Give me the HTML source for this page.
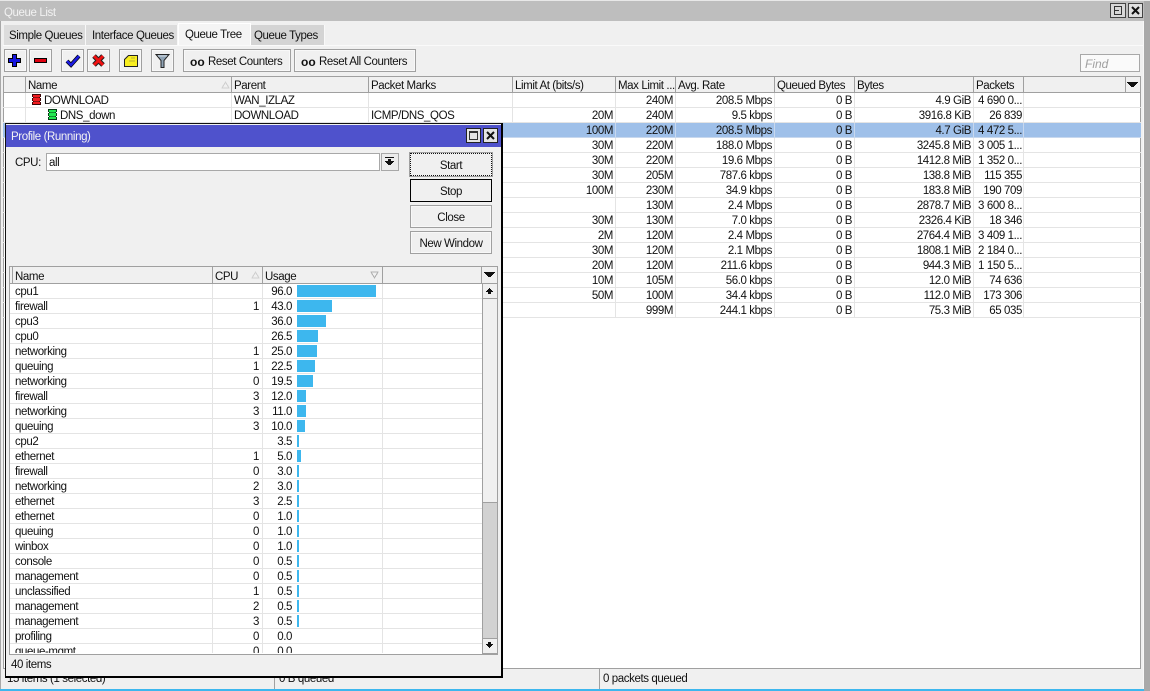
<!DOCTYPE html>
<html><head><meta charset="utf-8">
<style>
html,body{margin:0;padding:0;width:1150px;height:691px;overflow:hidden;background:#f0f0f0}
body{position:relative;font:11.5px/16px "Liberation Sans",sans-serif;letter-spacing:-.4px;color:#111}
div,span{position:absolute;box-sizing:border-box;white-space:nowrap}
svg{position:absolute;display:block;shape-rendering:crispEdges}
.tab{top:25px;height:20px;background:#dcdcdc;border-right:1px solid #f8f8f8;padding:3px 0 0 5px}
.btn{top:49px;height:23px;border:1px solid #a0a0a0;background:#f0f0f0;box-shadow:inset 0 0 0 1px #f8f8f8}
.btn b{position:absolute;left:6px;top:4px;font-size:12px;letter-spacing:0}
.hd{top:76px;height:17px;background:#f0f0f0;border-right:1px solid #a0a0a0;border-top:1px solid #a0a0a0;border-bottom:1px solid #a0a0a0;padding:1px 0 0 2px}
.r{left:3px;width:1138px;height:15px;border-bottom:1px solid #e4e4e4}
.r span{top:0;height:14px;border-right:1px solid #e4e4e4;padding:0 2px;text-align:right}
.r .sel{border-right-color:#c8d8ee}
.c0{left:0;width:23px}.c1{left:23px;width:206px;text-align:left!important}.c2{left:229px;width:137px;text-align:left!important}.c3{left:366px;width:144px;text-align:left!important}
.c4{left:510px;width:103px}.c5{left:613px;width:60px}.c6{left:673px;width:99px}.c7{left:772px;width:80px}.c8{left:852px;width:119px}.c9{left:971px;width:50px;padding:0 1px!important}
.pb{left:410px;width:82px;height:23px;border:1px solid #a0a0a0;background:#f0f0f0;text-align:center;padding-top:4px;box-shadow:inset 0 0 0 1px #f8f8f8}
.ph{top:266px;height:18px;background:#f0f0f0;border-right:1px solid #a0a0a0;border-top:1px solid #a0a0a0;border-bottom:1px solid #a0a0a0;padding:2px 0 0 2px}
.p{left:0;width:472px;height:15px;border-bottom:1px solid #e4e4e4}
.p span{top:0;height:14px;border-right:1px solid #e4e4e4}
.n{left:-1px;width:204px;padding-left:6px}.u{left:203px;width:50px;text-align:right;padding-right:3px}.s{left:253px;width:120px}.v{left:253px;width:29px;border:0!important;text-align:right}
.b{left:287px!important;top:1px!important;height:12px!important;background:#3db7ee;border:0!important}
</style></head><body>

<div style="left:0;top:0;width:1150px;height:1px;background:#e8e8e8"></div>
<div style="left:0;top:1px;width:1150px;height:20px;background:#bebebe"></div>
<div style="left:4px;top:5px;color:#f2f2f2">Queue List</div>
<div style="left:0;top:21px;width:1px;height:670px;background:#a8a8a8"></div>
<div style="left:1144px;top:1px;width:6px;height:690px;background:#a9a9a9"></div>
<div style="left:1143px;top:21px;width:1px;height:668px;background:#f8f8f8"></div>
<div style="left:1110px;top:3px;width:16px;height:15px;border:1px solid #444;background:#d8d8d8"><div style="left:3px;top:2px;width:8px;height:9px;border:1px solid #333"></div><div style="left:3px;top:6px;width:5px;height:1px;background:#333"></div></div>
<div style="left:1128px;top:3px;width:15px;height:15px;border:1px solid #444;background:#e0e0e0"><svg width="13" height="13" style="left:0;top:0;shape-rendering:auto"><path d="M3 3l7 7M10 3l-7 7" stroke="#111" stroke-width="2"/></svg></div>

<div class="tab" style="left:4px;width:82px">Simple Queues</div>
<div class="tab" style="left:86px;width:92px;padding-left:6px">Interface Queues</div>
<div class="tab" style="left:178px;top:23px;height:23px;width:73px;background:#f4f4f4;border:1px solid #fff;padding:3px 0 0 6px">Queue Tree</div>
<div class="tab" style="left:251px;width:74px;background:#d4d4d4;padding-left:3px">Queue Types</div>
<div style="left:3px;top:45px;width:1140px;height:1px;background:#fafafa"></div>

<div class="btn" style="left:4px;width:23px"><svg width="21" height="21"><path d="M7 4h5v4h4v5h-4v4H7v-4H3V8h4z" fill="#000"/><path d="M8 5h3v4h4v3h-4v4H8v-4H4V9h4z" fill="#1515e0"/></svg></div>
<div class="btn" style="left:29px;width:23px"><svg width="21" height="21"><rect x="4" y="8" width="13" height="5" fill="#000"/><rect x="5" y="9" width="11" height="3" fill="#e00010"/></svg></div>
<div class="btn" style="left:61px;width:23px"><svg width="21" height="21" style="shape-rendering:auto"><path d="M5 11l4 4 8-9" fill="none" stroke="#000" stroke-width="4"/><path d="M5 11l4 4 8-9" fill="none" stroke="#1a1ae0" stroke-width="2.500"/></svg></div>
<div class="btn" style="left:87px;width:23px"><svg width="21" height="21" style="shape-rendering:auto"><path d="M6 6l9 9M15 6l-9 9" stroke="#222" stroke-width="5"/><path d="M6 6l9 9M15 6l-9 9" stroke="#f01010" stroke-width="3"/></svg></div>
<div class="btn" style="left:119px;width:23px"><svg width="21" height="21"><path d="M4.500 16.500V9.500l4-4h9v11z" fill="#f8ee20" stroke="#222" style="shape-rendering:auto"/><path d="M11 8h4M9 11h6" stroke="#b8b030"/></svg></div>
<div class="btn" style="left:151px;width:23px"><svg width="21" height="21" style="shape-rendering:auto"><path d="M4 4.500h13l-5 6v7h-3v-7z" fill="#8fa3b5" stroke="#222"/><path d="M6 6h9" stroke="#d5dde5"/></svg></div>
<div class="btn" style="left:183px;width:108px"><b>oo</b><span style="left:24px;top:4px">Reset Counters</span></div>
<div class="btn" style="left:294px;width:122px"><b>oo</b><span style="left:24px;top:4px">Reset All Counters</span></div>
<div style="left:1080px;top:54px;width:60px;height:18px;border:1px solid #a8a8a8;background:#fafafa;color:#a0a0a0;font-style:italic;font-size:12px;padding:1px 0 0 4px;letter-spacing:0">Find</div>

<!-- main table -->
<div style="left:3px;top:76px;width:1138px;height:593px;background:#fff;border:1px solid #a0a0a0"></div>
<div class="hd" style="left:3px;width:23px;border-left:1px solid #a0a0a0"></div>
<div class="hd" style="left:26px;width:206px">Name<svg width="9" height="8" style="left:195px;top:4px"><path d="M1 7h7L4.500 1z" fill="#f0f0f0" stroke="#d0d0d0"/></svg></div>
<div class="hd" style="left:232px;width:137px">Parent</div>
<div class="hd" style="left:369px;width:144px">Packet Marks</div>
<div class="hd" style="left:513px;width:103px">Limit At (bits/s)</div>
<div class="hd" style="left:616px;width:60px">Max Limit ...</div>
<div class="hd" style="left:676px;width:99px">Avg. Rate</div>
<div class="hd" style="left:775px;width:80px">Queued Bytes</div>
<div class="hd" style="left:855px;width:119px">Bytes</div>
<div class="hd" style="left:974px;width:50px">Packets</div>
<div class="hd" style="left:1024px;width:102px"></div>
<div class="hd" style="left:1126px;width:15px;padding:0"><svg width="11" height="6" style="left:1px;top:5px"><path d="M0 0h11v1h-1v1H9v1H8v1H7v1H4V4H3V3H2V2H1V1H0z" fill="#111"/></svg></div>

<div class="r" style="top:93px"><span class="c0"></span><span class="c1"></span><span class="c2">WAN_IZLAZ</span><span class="c3"></span><span class="c4"></span><span class="c5">240M</span><span class="c6">208.5 Mbps</span><span class="c7">0 B</span><span class="c8">4.9 GiB</span><span class="c9">4 690 0...</span></div>
<div class="r" style="top:108px"><span class="c0"></span><span class="c1"></span><span class="c2">DOWNLOAD</span><span class="c3">ICMP/DNS_QOS</span><span class="c4">20M</span><span class="c5">240M</span><span class="c6">9.5 kbps</span><span class="c7">0 B</span><span class="c8">3916.8 KiB</span><span class="c9">26 839</span></div>
<div style="left:44px;top:93px">DOWNLOAD</div>
<div style="left:60px;top:108px">DNS_down</div>
<svg width="11" height="11" style="left:31px;top:94px"><path d="M1 0h9v3H9v1h1v3H9v1h1v3H1V8h1V7H1V4h1V3H1z" fill="#3a0505"/><path d="M2 1h7v2H8v1h1v3H8v1h1v2H2V8h1V7H2V4h1V3H2z" fill="#f01c20"/><path d="M3 3h5v1H3zM3 7h5v1H3z" fill="#901010"/></svg>
<svg width="11" height="11" style="left:47px;top:109px"><path d="M1 0h9v3H9v1h1v3H9v1h1v3H1V8h1V7H1V4h1V3H1z" fill="#053a15"/><path d="M2 1h7v2H8v1h1v3H8v1h1v2H2V8h1V7H2V4h1V3H2z" fill="#22e850"/><path d="M3 3h5v1H3zM3 7h5v1H3z" fill="#109030"/></svg>

<div class="r" style="top:123px;background:#9fc0e9;border-bottom-color:#c8d8ee"><span class="c4 sel">100M</span><span class="c5 sel">220M</span><span class="c6 sel">208.5 Mbps</span><span class="c7 sel">0 B</span><span class="c8 sel">4.7 GiB</span><span class="c9 sel">4 472 5...</span></div>
<div class="r" style="top:138px"><span class="c4">30M</span><span class="c5">220M</span><span class="c6">188.0 Mbps</span><span class="c7">0 B</span><span class="c8">3245.8 MiB</span><span class="c9">3 005 1...</span></div>
<div class="r" style="top:153px"><span class="c4">30M</span><span class="c5">220M</span><span class="c6">19.6 Mbps</span><span class="c7">0 B</span><span class="c8">1412.8 MiB</span><span class="c9">1 352 0...</span></div>
<div class="r" style="top:168px"><span class="c4">30M</span><span class="c5">205M</span><span class="c6">787.6 kbps</span><span class="c7">0 B</span><span class="c8">138.8 MiB</span><span class="c9">115 355</span></div>
<div class="r" style="top:183px"><span class="c4">100M</span><span class="c5">230M</span><span class="c6">34.9 kbps</span><span class="c7">0 B</span><span class="c8">183.8 MiB</span><span class="c9">190 709</span></div>
<div class="r" style="top:198px"><span class="c4"></span><span class="c5">130M</span><span class="c6">2.4 Mbps</span><span class="c7">0 B</span><span class="c8">2878.7 MiB</span><span class="c9">3 600 8...</span></div>
<div class="r" style="top:213px"><span class="c4">30M</span><span class="c5">130M</span><span class="c6">7.0 kbps</span><span class="c7">0 B</span><span class="c8">2326.4 KiB</span><span class="c9">18 346</span></div>
<div class="r" style="top:228px"><span class="c4">2M</span><span class="c5">120M</span><span class="c6">2.4 Mbps</span><span class="c7">0 B</span><span class="c8">2764.4 MiB</span><span class="c9">3 409 1...</span></div>
<div class="r" style="top:243px"><span class="c4">30M</span><span class="c5">120M</span><span class="c6">2.1 Mbps</span><span class="c7">0 B</span><span class="c8">1808.1 MiB</span><span class="c9">2 184 0...</span></div>
<div class="r" style="top:258px"><span class="c4">20M</span><span class="c5">120M</span><span class="c6">211.6 kbps</span><span class="c7">0 B</span><span class="c8">944.3 MiB</span><span class="c9">1 150 5...</span></div>
<div class="r" style="top:273px"><span class="c4">10M</span><span class="c5">105M</span><span class="c6">56.0 kbps</span><span class="c7">0 B</span><span class="c8">12.0 MiB</span><span class="c9">74 636</span></div>
<div class="r" style="top:288px"><span class="c4">50M</span><span class="c5">100M</span><span class="c6">34.4 kbps</span><span class="c7">0 B</span><span class="c8">112.0 MiB</span><span class="c9">173 306</span></div>
<div class="r" style="top:303px"><span class="c4"></span><span class="c5">999M</span><span class="c6">244.1 kbps</span><span class="c7">0 B</span><span class="c8">75.3 MiB</span><span class="c9">65 035</span></div>

<!-- status -->
<div style="left:3px;top:669px;width:272px;height:20px;border-right:1px solid #a0a0a0;padding:2px 0 0 4px">15 items (1 selected)</div>
<div style="left:275px;top:669px;width:325px;height:20px;border-right:1px solid #a0a0a0;padding:2px 0 0 4px">0 B queued</div>
<div style="left:603px;top:671px">0 packets queued</div>
<div style="left:0;top:689px;width:1144px;height:2px;background:#3db7ee"></div>

<!-- Profile window -->
<div style="left:5px;top:123px;width:498px;height:555px;background:#f0f0f0;border:1px solid #111;border-right:2px solid #000;border-bottom:2px solid #000"></div>
<div style="left:6px;top:125px;width:495px;height:22px;background:#4f52cc"></div>
<div style="left:11px;top:129px;color:#f4f4f4">Profile (Running)</div>
<div style="left:466px;top:128px;width:15px;height:15px;border:1px solid #222;background:#e4e4e4"><div style="left:2px;top:2px;width:9px;height:9px;border:1px solid #333;border-top-width:2px"></div></div>
<div style="left:483px;top:128px;width:15px;height:15px;border:1px solid #222;background:#e4e4e4"><svg width="13" height="13" style="left:0;top:0;shape-rendering:auto"><path d="M3 3l7 7M10 3l-7 7" stroke="#111" stroke-width="2"/></svg></div>

<div style="left:15px;top:155px">CPU:</div>
<div style="left:46px;top:153px;width:334px;height:18px;background:#fff;border:1px solid #a8a8a8;padding:1px 0 0 2px">all</div>
<div style="left:381px;top:153px;width:18px;height:18px;border:1px solid #a8a8a8;background:#ececec"><svg width="12" height="12" style="left:2px;top:2px"><path d="M1 1h9v1H1zM4 3h3v2h3v1H9v1H8v1H7v1H4V8H3V7H2V6H1V5h3z" fill="#111"/></svg></div>
<div class="pb" style="top:153px;border:1px dotted #111;outline:1px solid #a0a0a0;box-shadow:none">Start</div>
<div class="pb" style="top:179px;border:1px solid #000;box-shadow:none">Stop</div>
<div class="pb" style="top:205px">Close</div>
<div class="pb" style="top:231px">New Window</div>

<div style="left:9px;top:266px;width:489px;height:388px;background:#fff;border-left:1px solid #a0a0a0;border-right:1px solid #a0a0a0"></div>
<div class="ph" style="left:9px;width:4px;border-left:1px solid #a0a0a0"></div>
<div class="ph" style="left:13px;width:200px">Name</div>
<div class="ph" style="left:213px;width:50px">CPU<svg width="9" height="8" style="left:38px;top:4px"><path d="M1 7h7L4.500 1z" fill="#f0f0f0" stroke="#d0d0d0"/></svg></div>
<div class="ph" style="left:263px;width:120px">Usage<svg width="9" height="8" style="left:107px;top:4px"><path d="M1 1h7L4.500 7z" fill="#f0f0f0" stroke="#b0b0b0"/></svg></div>
<div class="ph" style="left:383px;width:99px"></div>
<div class="ph" style="left:482px;width:16px;border-left:0;padding:0"><svg width="11" height="6" style="left:2px;top:5px"><path d="M0 0h11v1h-1v1H9v1H8v1H7v1H4V4H3V3H2V2H1V1H0z" fill="#111"/></svg></div>

<div style="left:10px;top:284px;width:472px;height:369px;overflow:hidden">
<div class="p" style="top:0"><span class="n">cpu1</span><span class="u"></span><span class="s"></span><span class="v">96.0</span><span class="b" style="width:79px"></span></div>
<div class="p" style="top:15px"><span class="n">firewall</span><span class="u">1</span><span class="s"></span><span class="v">43.0</span><span class="b" style="width:35px"></span></div>
<div class="p" style="top:30px"><span class="n">cpu3</span><span class="u"></span><span class="s"></span><span class="v">36.0</span><span class="b" style="width:29px"></span></div>
<div class="p" style="top:45px"><span class="n">cpu0</span><span class="u"></span><span class="s"></span><span class="v">26.5</span><span class="b" style="width:21px"></span></div>
<div class="p" style="top:60px"><span class="n">networking</span><span class="u">1</span><span class="s"></span><span class="v">25.0</span><span class="b" style="width:20px"></span></div>
<div class="p" style="top:75px"><span class="n">queuing</span><span class="u">1</span><span class="s"></span><span class="v">22.5</span><span class="b" style="width:18px"></span></div>
<div class="p" style="top:90px"><span class="n">networking</span><span class="u">0</span><span class="s"></span><span class="v">19.5</span><span class="b" style="width:16px"></span></div>
<div class="p" style="top:105px"><span class="n">firewall</span><span class="u">3</span><span class="s"></span><span class="v">12.0</span><span class="b" style="width:9px"></span></div>
<div class="p" style="top:120px"><span class="n">networking</span><span class="u">3</span><span class="s"></span><span class="v">11.0</span><span class="b" style="width:9px"></span></div>
<div class="p" style="top:135px"><span class="n">queuing</span><span class="u">3</span><span class="s"></span><span class="v">10.0</span><span class="b" style="width:8px"></span></div>
<div class="p" style="top:150px"><span class="n">cpu2</span><span class="u"></span><span class="s"></span><span class="v">3.5</span><span class="b" style="width:2px"></span></div>
<div class="p" style="top:165px"><span class="n">ethernet</span><span class="u">1</span><span class="s"></span><span class="v">5.0</span><span class="b" style="width:4px"></span></div>
<div class="p" style="top:180px"><span class="n">firewall</span><span class="u">0</span><span class="s"></span><span class="v">3.0</span><span class="b" style="width:2px"></span></div>
<div class="p" style="top:195px"><span class="n">networking</span><span class="u">2</span><span class="s"></span><span class="v">3.0</span><span class="b" style="width:2px"></span></div>
<div class="p" style="top:210px"><span class="n">ethernet</span><span class="u">3</span><span class="s"></span><span class="v">2.5</span><span class="b" style="width:2px"></span></div>
<div class="p" style="top:225px"><span class="n">ethernet</span><span class="u">0</span><span class="s"></span><span class="v">1.0</span><span class="b" style="width:2px"></span></div>
<div class="p" style="top:240px"><span class="n">queuing</span><span class="u">0</span><span class="s"></span><span class="v">1.0</span><span class="b" style="width:2px"></span></div>
<div class="p" style="top:255px"><span class="n">winbox</span><span class="u">0</span><span class="s"></span><span class="v">1.0</span><span class="b" style="width:2px"></span></div>
<div class="p" style="top:270px"><span class="n">console</span><span class="u">0</span><span class="s"></span><span class="v">0.5</span><span class="b" style="width:2px"></span></div>
<div class="p" style="top:285px"><span class="n">management</span><span class="u">0</span><span class="s"></span><span class="v">0.5</span><span class="b" style="width:2px"></span></div>
<div class="p" style="top:300px"><span class="n">unclassified</span><span class="u">1</span><span class="s"></span><span class="v">0.5</span><span class="b" style="width:2px"></span></div>
<div class="p" style="top:315px"><span class="n">management</span><span class="u">2</span><span class="s"></span><span class="v">0.5</span><span class="b" style="width:2px"></span></div>
<div class="p" style="top:330px"><span class="n">management</span><span class="u">3</span><span class="s"></span><span class="v">0.5</span><span class="b" style="width:2px"></span></div>
<div class="p" style="top:345px"><span class="n">profiling</span><span class="u">0</span><span class="s"></span><span class="v">0.0</span></div>
<div class="p" style="top:360px"><span class="n">queue-mgmt</span><span class="u">0</span><span class="s"></span><span class="v">0.0</span></div>
</div>

<!-- profile scrollbar -->
<div style="left:482px;top:284px;width:16px;height:370px;background:#f0f0f0;border-left:1px solid #a0a0a0;border-right:1px solid #a0a0a0"></div>
<div style="left:483px;top:284px;width:14px;height:15px;background:#f0f0f0;border-bottom:1px solid #a0a0a0"><svg width="12" height="10" style="left:1px;top:2px"><path d="M5 2h1v1h1v1h1v1h1v1H7v2H4V6H2V5h1V4h1V3h1z" fill="#111"/></svg></div>
<div style="left:483px;top:299px;width:14px;height:204px;background:#f0f0f0;border-bottom:1px solid #a0a0a0"></div>
<div style="left:483px;top:503px;width:14px;height:135px;background:#d2d2d2"></div>
<div style="left:483px;top:638px;width:14px;height:16px;background:#f0f0f0;border-top:1px solid #a0a0a0;border-bottom:1px solid #a0a0a0"><svg width="12" height="10" style="left:1px;top:2px"><path d="M4 1h3v2h2v1H8v1H7v1H6v1H5V6H4V5H3V4H2V3h2z" fill="#111"/></svg></div>
<div style="left:9px;top:654px;width:489px;height:1px;background:#a0a0a0"></div>
<div style="left:11px;top:657px">40 items</div>
</body></html>
